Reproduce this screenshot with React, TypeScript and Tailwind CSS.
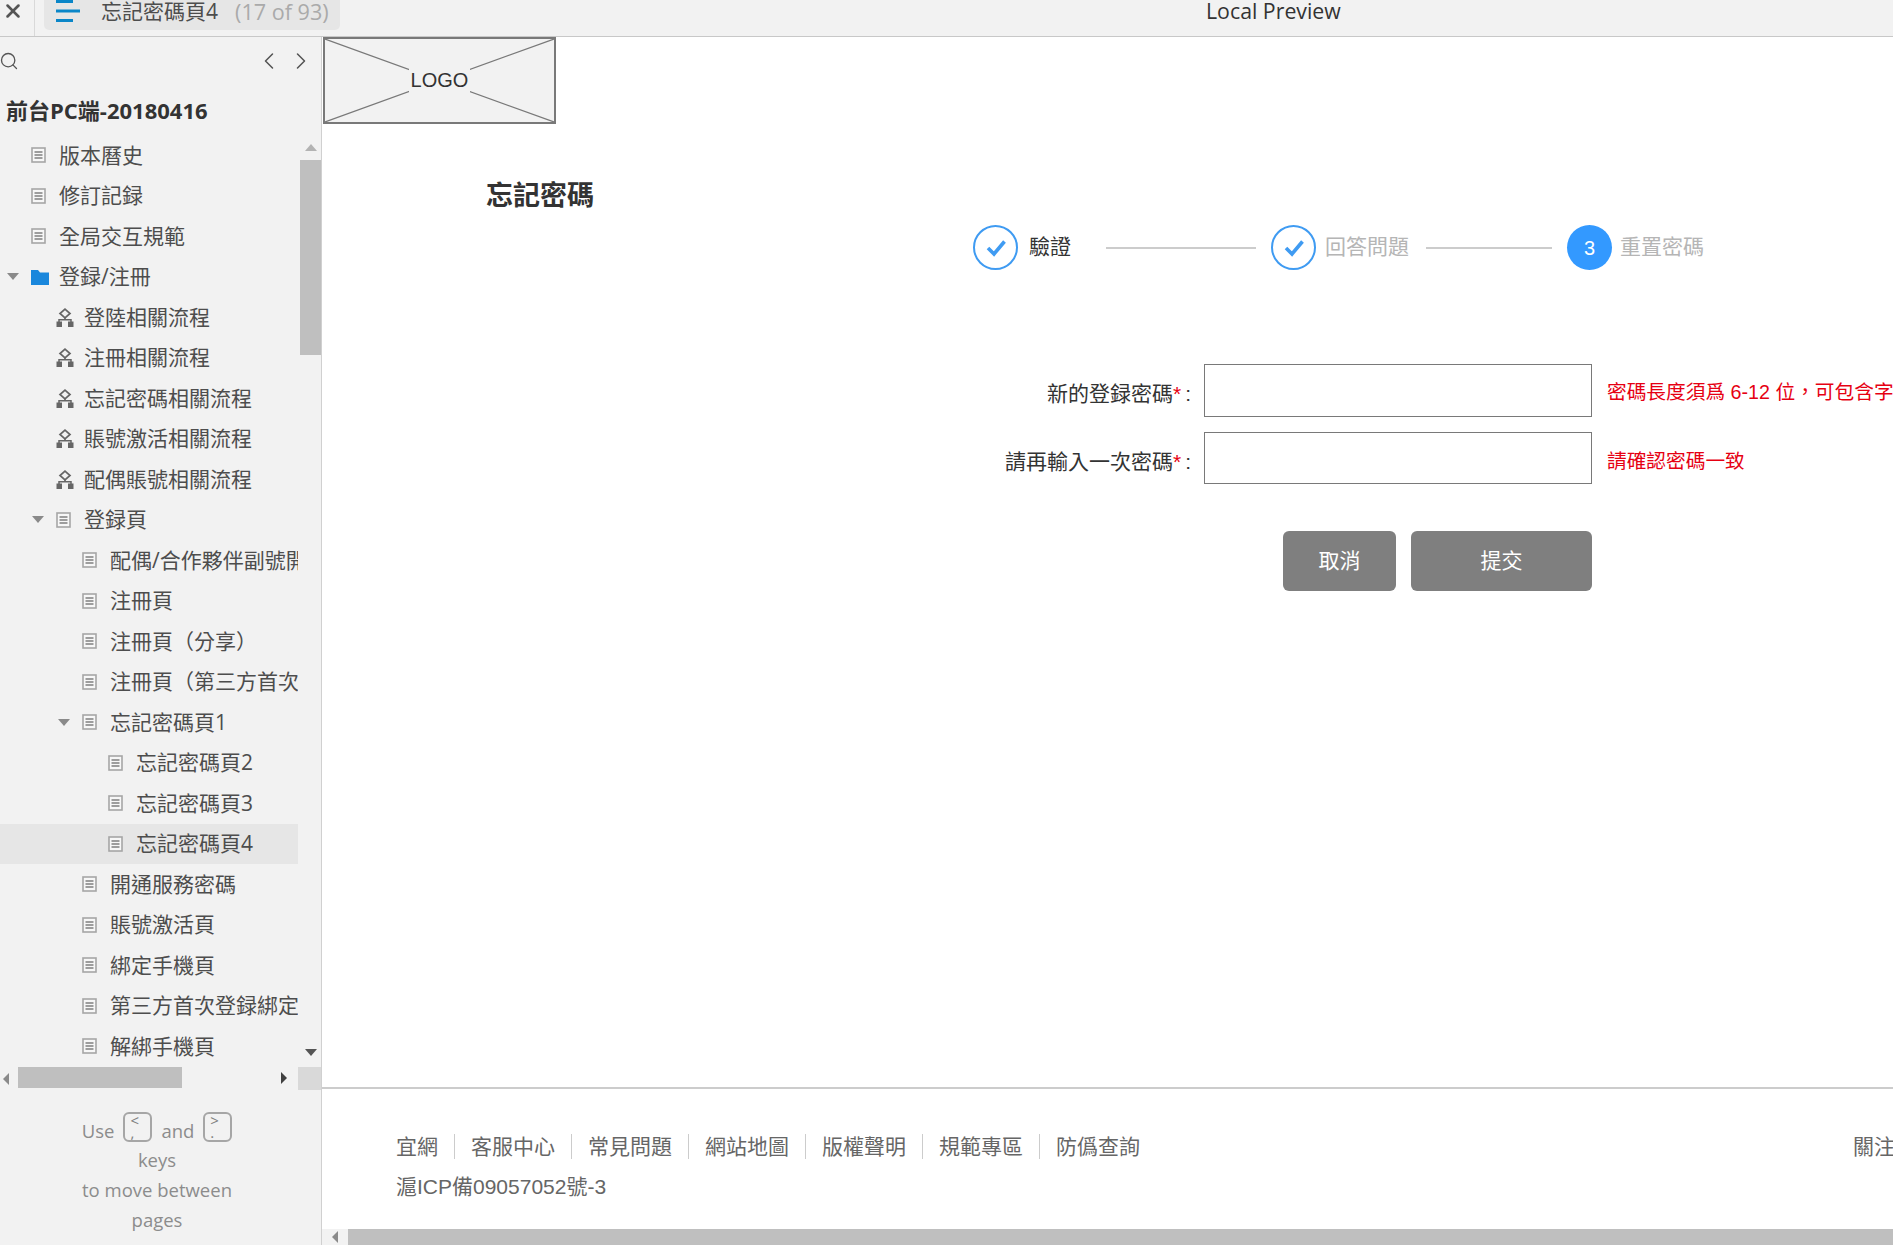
import { Search, ChevronLeft, ChevronRight, X } from "lucide-react";

const SANS = "font-['Open_Sans','Noto_Sans_CJK_TC',sans-serif]";
const ARIAL = "font-['Liberation_Sans','Noto_Sans_CJK_TC',sans-serif]";

type NodeType = "page" | "folder" | "flow";

interface TreeNode {
  label: string;
  level: number;
  type: NodeType;
  open?: boolean;
  selected?: boolean;
}

const tree: TreeNode[] = [
  { label: "版本曆史", level: 0, type: "page" },
  { label: "修訂記録", level: 0, type: "page" },
  { label: "全局交互規範", level: 0, type: "page" },
  { label: "登録/注冊", level: 0, type: "folder", open: true },
  { label: "登陸相關流程", level: 1, type: "flow" },
  { label: "注冊相關流程", level: 1, type: "flow" },
  { label: "忘記密碼相關流程", level: 1, type: "flow" },
  { label: "賬號激活相關流程", level: 1, type: "flow" },
  { label: "配偶賬號相關流程", level: 1, type: "flow" },
  { label: "登録頁", level: 1, type: "page", open: true },
  { label: "配偶/合作夥伴副號開通", level: 2, type: "page" },
  { label: "注冊頁", level: 2, type: "page" },
  { label: "注冊頁（分享）", level: 2, type: "page" },
  { label: "注冊頁（第三方首次登録）", level: 2, type: "page" },
  { label: "忘記密碼頁1", level: 2, type: "page", open: true },
  { label: "忘記密碼頁2", level: 3, type: "page" },
  { label: "忘記密碼頁3", level: 3, type: "page" },
  { label: "忘記密碼頁4", level: 3, type: "page", selected: true },
  { label: "開通服務密碼", level: 2, type: "page" },
  { label: "賬號激活頁", level: 2, type: "page" },
  { label: "綁定手機頁", level: 2, type: "page" },
  { label: "第三方首次登録綁定", level: 2, type: "page" },
  { label: "解綁手機頁", level: 2, type: "page" },
];

const footerLinks = ["宜網", "客服中心", "常見問題", "網站地圖", "版權聲明", "規範專區", "防僞查詢"];

function PageIcon() {
  return (
    <svg width="15" height="16" viewBox="0 0 15 16" className="shrink-0">
      <rect x="1" y="1" width="13" height="14" fill="#f7f7f7" stroke="#a6a6a6" strokeWidth="1.6" />
      <path d="M3.5 5h8M3.5 8h8M3.5 11h8" stroke="#808080" strokeWidth="1.3" />
    </svg>
  );
}

function FolderIcon() {
  return (
    <svg width="18" height="16" viewBox="0 0 18 16" className="shrink-0">
      <path d="M0 1h7l2 2.5h9V16H0z" fill="#1a87dc" />
    </svg>
  );
}

function FlowIcon() {
  return (
    <svg width="18" height="19" viewBox="0 0 18 19" className="shrink-0">
      <path d="M9 1.2L14 5.5L9 9.8L4 5.5Z" fill="none" stroke="#666" strokeWidth="1.7" />
      <path d="M9 9.5v2.5M3 14v-2.2h12V14" fill="none" stroke="#666" strokeWidth="1.5" />
      <rect x="0.5" y="13.5" width="5.5" height="5.5" fill="#666" />
      <rect x="12" y="13.5" width="5.5" height="5.5" fill="#666" />
    </svg>
  );
}

function Triangle({ dir, color = "#8a8a8a" }: { dir: "up" | "down" | "left" | "right"; color?: string }) {
  const paths = {
    up: "M0 8 L6 1 L12 8 Z",
    down: "M0 1 L12 1 L6 8 Z",
    left: "M9 0 L9 12 L3 6 Z",
    right: "M3 0 L3 12 L9 6 Z",
  };
  const size = dir === "up" || dir === "down" ? "w-[12px] h-[9px]" : "w-[12px] h-[12px]";
  const box = dir === "up" || dir === "down" ? "0 0 12 9" : "0 0 12 12";
  return (
    <svg viewBox={box} className={`${size} shrink-0`}>
      <path d={paths[dir]} fill={color} />
    </svg>
  );
}

function TreeRow({ node }: { node: TreeNode }) {
  const indents = ["pl-[7px]", "pl-[32px]", "pl-[58px]", "pl-[84px]"];
  return (
    <div
      className={`flex h-[40.5px] w-[298px] items-center overflow-hidden whitespace-nowrap ${indents[node.level]} ${
        node.selected ? "bg-[#e6e6e6]" : ""
      }`}
    >
      <span className="flex w-[24px] shrink-0">{node.open && <Triangle dir="down" />}</span>
      <span className="flex w-[28px] shrink-0 items-center">
        {node.type === "page" && <PageIcon />}
        {node.type === "folder" && <FolderIcon />}
        {node.type === "flow" && <FlowIcon />}
      </span>
      <span className="text-[21px] leading-none text-[#4d4d4d]">{node.label}</span>
    </div>
  );
}

function KeyCap({ top, bottom }: { top: string; bottom: string }) {
  return (
    <span className="flex h-[30px] w-[29px] flex-col items-start rounded-[6px] border-2 border-[#a6a6a6] pl-[5px] text-[15px] leading-[12px] text-[#808080]">
      <span>{top}</span>
      <span>{bottom}</span>
    </span>
  );
}

function Sidebar() {
  return (
    <aside className={`flex w-[322px] shrink-0 flex-col border-r border-[#d0d0d0] bg-[#f2f2f2] ${SANS}`}>
      <div className="flex h-[48px] shrink-0 items-center pr-[6px]">
        <Search className="-ml-[1px] h-[20px] w-[20px] text-[#555]" strokeWidth={1.6} />
        <ChevronLeft className="ml-auto h-[28px] w-[28px] text-[#555]" strokeWidth={1.3} />
        <ChevronRight className="ml-[4.5px] h-[28px] w-[28px] text-[#555]" strokeWidth={1.3} />
      </div>
      <div className="flex h-[50px] shrink-0 items-center pl-[6px] text-[22px] font-bold text-[#333]">
        前台PC端-20180416
      </div>
      <div className="flex h-[932px] shrink-0">
        <div className="w-[300px] shrink-0 overflow-hidden">
          <div className="flex flex-col">
            {tree.map((node) => (
              <TreeRow key={node.label} node={node} />
            ))}
          </div>
        </div>
        <div className="flex w-[21px] flex-col items-center">
          <div className="flex h-[25px] w-full shrink-0 items-center justify-center bg-[#f2f2f2]">
            <Triangle dir="up" color="#b3b3b3" />
          </div>
          <div className="h-[195px] w-full shrink-0 bg-[#bfbfbf]" />
          <div className="mt-auto flex h-[30px] w-full shrink-0 items-center justify-center">
            <Triangle dir="down" color="#555" />
          </div>
        </div>
      </div>
      <div className="flex h-[23px] shrink-0">
        <div className="flex w-[18px] shrink-0 items-center justify-start">
          <Triangle dir="left" color="#8a8a8a" />
        </div>
        <div className="h-[21px] w-[164px] shrink-0 bg-[#bfbfbf]" />
        <div className="flex w-[116px] shrink-0 items-center justify-end pb-[2px] pr-[8px]">
          <Triangle dir="right" color="#404040" />
        </div>
        <div className="w-[23px] shrink-0 bg-[#d9d9d9]" />
      </div>
      <div className="flex flex-col items-center pr-[7px] pt-[22px] text-[18.5px] leading-[30px] text-[#8c8c8c]">
        <div className="flex h-[30px] gap-[9px]">
          <span className="self-end leading-[22px]">Use</span>
          <KeyCap top="<" bottom="," />
          <span className="self-end leading-[22px]">and</span>
          <KeyCap top=">" bottom="." />
        </div>
        <div className="mt-[3px]">keys</div>
        <div>to move between</div>
        <div>pages</div>
      </div>
    </aside>
  );
}

function StepCheck() {
  return (
    <span className="flex h-[45px] w-[45px] shrink-0 items-center justify-center rounded-full border-2 border-[#3f9bf2] bg-white">
      <svg width="22" height="18" viewBox="0 0 22 18">
        <path d="M3 9l6 6L19.5 2.5" fill="none" stroke="#3f9bf2" strokeWidth="3.6" />
      </svg>
    </span>
  );
}

function Steps() {
  return (
    <div className="ml-[651px] mt-[9px] flex h-[45px] items-center text-[21px]">
      <StepCheck />
      <span className="ml-[11px] pb-[2px] text-[#333]">驗證</span>
      <span className="ml-[35px] h-[2px] w-[150px] bg-[#ccc]" />
      <span className="ml-[15px]">
        <StepCheck />
      </span>
      <span className="ml-[9px] pb-[2px] text-[#b5b5b5]">回答問題</span>
      <span className="ml-[17px] h-[2px] w-[126px] bg-[#ccc]" />
      <span className={`ml-[15px] flex h-[45px] w-[45px] shrink-0 items-center justify-center rounded-full bg-[#3399ff] text-[20px] text-white ${ARIAL}`}>
        3
      </span>
      <span className="ml-[8px] pb-[2px] text-[#b5b5b5]">重置密碼</span>
    </div>
  );
}

function FormRow({ label, hint, tall }: { label: string; hint: string; tall?: boolean }) {
  return (
    <div className="flex items-center">
      <label
        className={`w-[872px] shrink-0 pr-[3px] text-right text-[21px] leading-none text-[#333] ${tall ? "pt-[5px]" : "pt-[7px]"}`}
      >
        {label}
        <span className="text-[#e60012]">*</span>
        <span className="ml-[4px]">:</span>
      </label>
      <input
        className={`ml-[10px] w-[388px] shrink-0 border border-[#797979] bg-white ${tall ? "h-[53px]" : "h-[52px]"}`}
      />
      <span
        className={`ml-[15px] whitespace-nowrap text-[19.7px] leading-none text-[#e60012] ${tall ? "pt-[5px]" : "pt-[7px]"}`}
      >
        {hint}
      </span>
    </div>
  );
}

function Content() {
  return (
    <main className={`flex min-w-0 flex-1 flex-col overflow-hidden bg-white ${ARIAL}`}>
      <div className="relative ml-[1px] flex h-[87px] w-[233px] shrink-0 items-center justify-center border-2 border-[#797979] bg-[#f2f2f2] pb-[2px]">
        <svg viewBox="0 0 229 83" preserveAspectRatio="none" className="absolute inset-0 h-full w-full">
          <path d="M0 0L229 83M229 0L0 83" stroke="#797979" strokeWidth="1.2" />
        </svg>
        <span className="relative bg-[#f2f2f2] px-[2px] py-[3px] text-[20px] leading-none text-[#333]">LOGO</span>
      </div>
      <h1 className="ml-[164px] mt-[52px] flex h-[40px] shrink-0 items-center text-[27px] font-bold text-[#333]">
        忘記密碼
      </h1>
      <Steps />
      <div className="mt-[94px] flex flex-col gap-[15px]">
        <FormRow label="新的登録密碼" hint="密碼長度須爲 6-12 位，可包含字" tall />
        <FormRow label="請再輸入一次密碼" hint="請確認密碼一致" />
      </div>
      <div className="ml-[961px] mt-[47px] flex gap-[15px] text-[21px] text-white">
        <button className="h-[60px] w-[113px] rounded-[6px] bg-[#7f7f7f]">取消</button>
        <button className="h-[60px] w-[181px] rounded-[6px] bg-[#7f7f7f]">提交</button>
      </div>
      <div className="flex-1" />
      <footer className="h-[142px] shrink-0 border-t-2 border-[#ccc] pl-[74px] text-[21px] text-[#666]">
        <div className="mt-[45px] flex h-[25px] items-center">
          {footerLinks.map((link, i) => (
            <span
              key={link}
              className={
                i < footerLinks.length - 1
                  ? "mr-[16px] flex h-[25px] items-center border-r border-[#ccc] pr-[16px] leading-none"
                  : "leading-none"
              }
            >
              {link}
            </span>
          ))}
          <span className="ml-auto w-[40px] shrink-0 overflow-hidden whitespace-nowrap leading-none">關注</span>
        </div>
        <div className="mt-[13px] text-[21px] leading-[30px]">滬ICP備09057052號-3</div>
      </footer>
      <div className="flex h-[16px] shrink-0 bg-[#bfbfbf]">
        <div className="flex w-[26px] shrink-0 items-center justify-center bg-[#f2f2f2]">
          <Triangle dir="left" color="#8a8a8a" />
        </div>
      </div>
    </main>
  );
}

export default function App() {
  return (
    <div className={`flex h-screen w-full flex-col overflow-hidden bg-white ${SANS}`}>
      <header className="flex h-[37px] shrink-0 border-b border-[#c8c8c8] bg-[#f2f2f2]">
        <div className="flex h-full w-[35px] shrink-0 justify-center border-r border-[#d9d9d9] pr-[8px]">
          <X className="h-[22px] w-[22px] text-[#555]" strokeWidth={2.8} />
        </div>
        <div className="ml-[9px] flex h-[30px] w-[296px] shrink-0 items-center rounded-b-[5px] bg-[#e6e6e6] pl-[12px]">
          <svg width="24" height="24" viewBox="0 0 24 24" className="mb-[6px] shrink-0">
            <path d="M0 1.5h17M0 11h24M0 20.5h17" stroke="#0a86c8" strokeWidth="3" />
          </svg>
          <span className="ml-[21px] pb-[8px] text-[21px] leading-none text-[#4d4d4d]">忘記密碼頁4</span>
          <span className="ml-[17px] pb-[7px] text-[21.6px] leading-none text-[#aaa]">(17 of 93)</span>
        </div>
        <div className="ml-[866px] text-[21.3px] leading-[22px] text-[#333]">Local Preview</div>
      </header>
      <div className="flex min-h-0 flex-1">
        <Sidebar />
        <Content />
      </div>
    </div>
  );
}
